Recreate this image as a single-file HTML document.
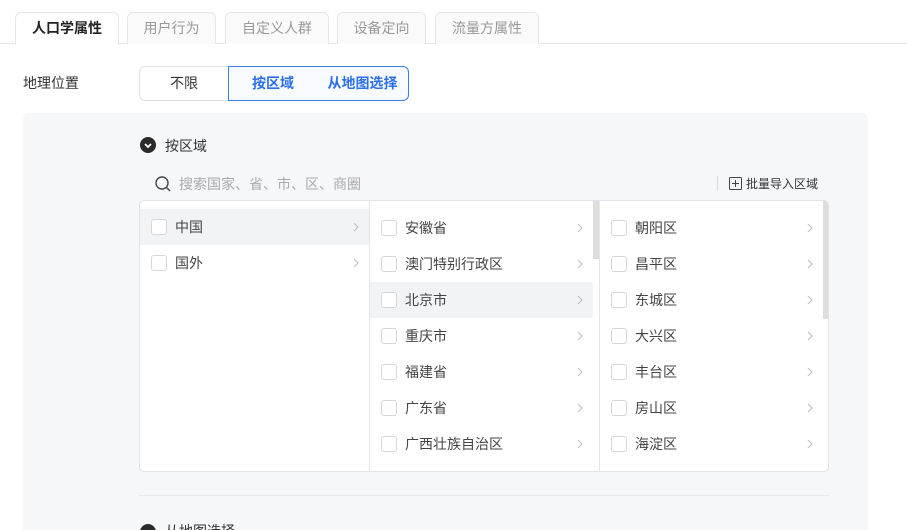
<!DOCTYPE html><html style="width:907px;height:530px;overflow:hidden"><head><meta charset="utf-8"><style>
*{margin:0;padding:0;box-sizing:border-box}
body{width:907px;height:530px;overflow:hidden;background:#fff;font-family:"Liberation Sans","Noto Sans CJK SC",sans-serif;font-size:14px;color:#333;position:relative}
.a{position:absolute}
.tab{position:absolute;top:12px;height:32px;border:1px solid #e5e6eb;border-bottom:none;border-radius:6px 6px 0 0;background:#fafafa;color:#999;font-size:14px;line-height:31px;text-align:center}
.seg{position:absolute;top:66px;height:35px;line-height:33px;text-align:center;font-size:14px}
.col{position:absolute;top:0;bottom:0}
.row{position:absolute;height:36px;line-height:36px;left:0;right:0}
.cb{position:absolute;left:11px;top:10px;width:16px;height:16px;border:1px solid #d5d7dc;border-radius:3px;background:#fff}
.t{position:absolute;left:35px;font-size:14px;color:#444}
.ar{position:absolute;right:10px;top:13px;width:6px;height:10px}
</style></head><body>
<div class="a" style="left:0;top:43px;width:907px;height:1px;background:#e5e6eb"></div>
<div class="tab" style="left:15px;width:104px;background:#fff;color:#222;font-weight:bold;height:33px">人口学属性</div>
<div class="tab" style="left:127px;width:89px">用户行为</div>
<div class="tab" style="left:225px;width:104px">自定义人群</div>
<div class="tab" style="left:337px;width:89px">设备定向</div>
<div class="tab" style="left:435px;width:104px">流量方属性</div>
<div class="a" style="left:23px;top:73px;font-size:14px;color:#333">地理位置</div>
<div class="seg" style="left:139px;width:90px;border:1px solid #dcdfe6;border-radius:6px 0 0 6px;color:#333">不限</div>
<div class="seg" style="left:228px;width:90px;border:1px solid #3b7cf0;background:#f7faff;color:#2d6fe8;font-weight:bold">按区域</div>
<div class="seg" style="left:317px;width:92px;border:1px solid #3b7cf0;border-left:none;border-radius:0 6px 6px 0;background:#f7faff;color:#2d6fe8;font-weight:bold">从地图选择</div>
<div class="a" style="left:23px;top:113px;width:845px;height:430px;background:#f6f7f9;border-radius:6px"></div>
<div class="a" style="left:140px;top:137px;width:16px;height:16px;border-radius:50%;background:#2b2b2b"><svg width="16" height="16"><path d="M5 7l3 3 3-3" stroke="#fff" stroke-width="1.8" fill="none"/></svg></div>
<div class="a" style="left:165px;top:136px;font-size:14px">按区域</div>
<svg class="a" style="left:154px;top:175px" width="18" height="18"><circle cx="8" cy="8" r="6" stroke="#444" stroke-width="1.4" fill="none"/><path d="M12.5 12.5l3.5 3.5" stroke="#444" stroke-width="1.4"/></svg>
<div class="a" style="left:179px;top:174px;color:#aaa;font-size:14px">搜索国家、省、市、区、商圈</div>
<div class="a" style="left:717px;top:176px;width:1px;height:15px;background:#ddd"></div>
<svg class="a" style="left:729px;top:177px" width="13" height="13"><rect x="0.5" y="0.5" width="12" height="12" rx="1" fill="none" stroke="#444"/><path d="M6.5 3v7M3 6.5h7" stroke="#444"/></svg>
<div class="a" style="left:746px;top:175px;font-size:12px;color:#333">批量导入区域</div>
<div class="a" style="left:139px;top:200px;width:690px;height:272px;background:#fff;border:1px solid #e1e3e8;border-radius:5px;overflow:hidden">
 <div class="col" style="left:0;width:230px;border-right:1px solid #e5e6eb">
  <div class="row" style="top:8px;background:#f2f3f5"><span class="cb"></span><span class="t">中国</span><svg class="ar"><path d="M1 1l4 4-4 4" stroke="#bbb" fill="none"/></svg></div>
  <div class="row" style="top:44px"><span class="cb"></span><span class="t">国外</span><svg class="ar"><path d="M1 1l4 4-4 4" stroke="#bbb" fill="none"/></svg></div>
 </div>
 <div class="col" style="left:230px;width:230px;border-right:1px solid #e5e6eb">
  <div class="row" style="top:9px;right:6px"><span class="cb"></span><span class="t">安徽省</span><svg class="ar"><path d="M1 1l4 4-4 4" stroke="#bbb" fill="none"/></svg></div>
  <div class="row" style="top:45px;right:6px"><span class="cb"></span><span class="t">澳门特别行政区</span><svg class="ar"><path d="M1 1l4 4-4 4" stroke="#bbb" fill="none"/></svg></div>
  <div class="row" style="top:81px;right:6px;background:#f2f3f5"><span class="cb"></span><span class="t">北京市</span><svg class="ar"><path d="M1 1l4 4-4 4" stroke="#bbb" fill="none"/></svg></div>
  <div class="row" style="top:117px;right:6px"><span class="cb"></span><span class="t">重庆市</span><svg class="ar"><path d="M1 1l4 4-4 4" stroke="#bbb" fill="none"/></svg></div>
  <div class="row" style="top:153px;right:6px"><span class="cb"></span><span class="t">福建省</span><svg class="ar"><path d="M1 1l4 4-4 4" stroke="#bbb" fill="none"/></svg></div>
  <div class="row" style="top:189px;right:6px"><span class="cb"></span><span class="t">广东省</span><svg class="ar"><path d="M1 1l4 4-4 4" stroke="#bbb" fill="none"/></svg></div>
  <div class="row" style="top:225px;right:6px"><span class="cb"></span><span class="t">广西壮族自治区</span><svg class="ar"><path d="M1 1l4 4-4 4" stroke="#bbb" fill="none"/></svg></div>
  <div class="a" style="right:0;top:0;width:6px;height:58px;background:#ddd"></div>
 </div>
 <div class="col" style="left:460px;width:229px">
  <div class="row" style="top:9px;right:6px"><span class="cb"></span><span class="t">朝阳区</span><svg class="ar"><path d="M1 1l4 4-4 4" stroke="#bbb" fill="none"/></svg></div>
  <div class="row" style="top:45px;right:6px"><span class="cb"></span><span class="t">昌平区</span><svg class="ar"><path d="M1 1l4 4-4 4" stroke="#bbb" fill="none"/></svg></div>
  <div class="row" style="top:81px;right:6px"><span class="cb"></span><span class="t">东城区</span><svg class="ar"><path d="M1 1l4 4-4 4" stroke="#bbb" fill="none"/></svg></div>
  <div class="row" style="top:117px;right:6px"><span class="cb"></span><span class="t">大兴区</span><svg class="ar"><path d="M1 1l4 4-4 4" stroke="#bbb" fill="none"/></svg></div>
  <div class="row" style="top:153px;right:6px"><span class="cb"></span><span class="t">丰台区</span><svg class="ar"><path d="M1 1l4 4-4 4" stroke="#bbb" fill="none"/></svg></div>
  <div class="row" style="top:189px;right:6px"><span class="cb"></span><span class="t">房山区</span><svg class="ar"><path d="M1 1l4 4-4 4" stroke="#bbb" fill="none"/></svg></div>
  <div class="row" style="top:225px;right:6px"><span class="cb"></span><span class="t">海淀区</span><svg class="ar"><path d="M1 1l4 4-4 4" stroke="#bbb" fill="none"/></svg></div>
  <div class="a" style="right:0;top:0;width:6px;height:118px;background:#ddd"></div>
 </div>
</div>
<div class="a" style="left:139px;top:495px;width:690px;height:1px;background:#e5e6eb"></div>
<div class="a" style="left:140px;top:524px;width:16px;height:16px;border-radius:50%;background:#2b2b2b"></div>
<div class="a" style="left:165px;top:521px;font-size:14px">从地图选择</div>
</body></html>
